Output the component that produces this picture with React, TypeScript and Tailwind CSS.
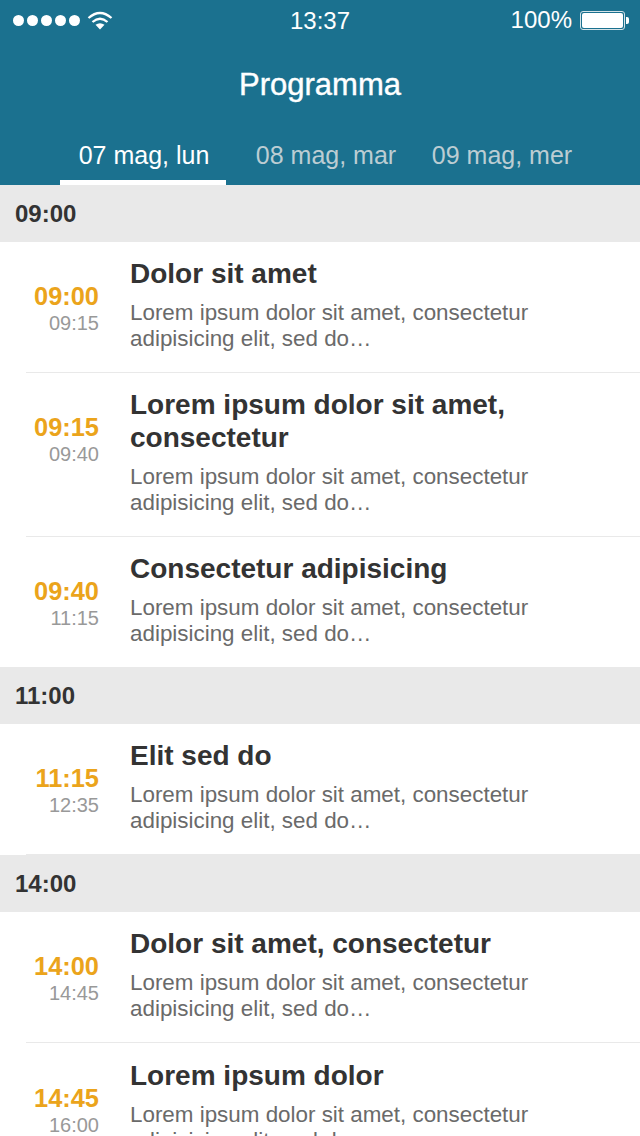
const font = { fontFamily: '"Liberation Sans", Arial, sans-serif' };

function Wifi() {
  return (
    <svg width="26" height="19" viewBox="0 0 26 19" fill="none" className="ml-[7px]">
      <path d="M1.5 7Q13 -3 24.5 7" stroke="white" strokeWidth="2.3" />
      <path d="M5.5 11Q13 4.5 20.5 11" stroke="white" strokeWidth="2.3" />
      <path d="M8.5 13.8Q13 10.8 17.5 13.8L13 18.6Z" fill="white" />
    </svg>
  );
}

function StatusBar() {
  return (
    <div className="relative flex h-[40px] items-center justify-between pl-[13px] pr-[11px] text-white">
      <div className="flex items-center">
        <div className="flex gap-[3px]">
          {[0, 1, 2, 3, 4].map((i) => (
            <span key={i} className="block h-[11px] w-[11px] rounded-full bg-white" />
          ))}
        </div>
        <Wifi />
      </div>
      <div className="absolute left-0 right-0 top-[7px] text-center text-[24px] leading-[28px]">13:37</div>
      <div className="flex items-center">
        <span className="text-[24px] leading-[28px]">100%</span>
        <div className="ml-[8px] flex items-center">
          <div className="h-[19px] w-[45px] rounded-[3px] border border-[#d5e3e8] p-[1px]">
            <div className="h-full w-full rounded-[2px] bg-white" />
          </div>
          <div className="ml-[1px] h-[7px] w-[3px] rounded-r-[2px] bg-white" />
        </div>
      </div>
    </div>
  );
}

function Tab({ label, active, w }: { label: string; active?: boolean; w: string }) {
  return (
    <div
      className={`${w} flex h-[55px] items-center justify-center border-b-[5px] text-[25px] leading-[28px] ${
        active ? "border-white text-white" : "border-transparent text-[#bccdd3]"
      }`}
    >
      {label}
    </div>
  );
}

function Section({ label, overlap }: { label: string; overlap?: boolean }) {
  return (
    <div
      className={`flex h-[57px] items-center bg-[#e9e9e9] pl-[15px] pt-[1px] text-[24px] font-bold leading-[28px] text-[#333333] ${
        overlap ? "-mt-[1px]" : ""
      }`}
    >
      {label}
    </div>
  );
}

function Row({ start, end, title, tail }: { start: string; end: string; title: string; tail?: boolean }) {
  return (
    <div className="pl-[26px]">
      <div className={`flex items-start border-b border-[#e9e9e9] pb-[19px] ${tail ? "pt-[16px]" : "pt-[15px]"}`}>
        <div className="w-[73px] pt-[25px] text-right">
          <div className="text-[25.4px] font-bold leading-[29px] text-[#eba41b]">{start}</div>
          <div className="text-[20px] leading-[24px] text-[#999999]">{end}</div>
        </div>
        <div className="ml-[31px] flex-1 pr-[100px]">
          <div className="text-[28px] font-bold leading-[33px] text-[#333333]">{title}</div>
          <div className="mt-[10px] pb-[1px] text-[22.4px] leading-[26px] text-[#6a6a6a]">
            Lorem ipsum dolor sit amet, consectetur
            <br />
            adipisicing elit, sed do…
          </div>
        </div>
      </div>
    </div>
  );
}

export default function App() {
  return (
    <div className="h-[1136px] w-[640px] overflow-hidden bg-white" style={font}>
      <div className="h-[185px] bg-[#1b718f]">
        <StatusBar />
        <div className="h-[90px] pt-[28px] text-center text-[31px] font-medium leading-[34px] text-white [-webkit-text-stroke:0.4px_white]">
          Programma
        </div>
        <div className="flex pl-[60px]">
          <Tab label="07 mag, lun" active w="w-[166px] pl-[2px]" />
          <Tab label="08 mag, mar" w="ml-[12px] w-[176px]" />
          <Tab label="09 mag, mer" w="w-[176px]" />
        </div>
      </div>
      <Section label="09:00" />
      <Row start="09:00" end="09:15" title="Dolor sit amet" />
      <Row start="09:15" end="09:40" title="Lorem ipsum dolor sit amet, consectetur" />
      <Row start="09:40" end="11:15" title="Consectetur adipisicing" />
      <Section label="11:00" overlap />
      <Row start="11:15" end="12:35" title="Elit sed do" />
      <Section label="14:00" />
      <Row start="14:00" end="14:45" title="Dolor sit amet, consectetur" />
      <Row start="14:45" end="16:00" title="Lorem ipsum dolor" tail />
    </div>
  );
}
